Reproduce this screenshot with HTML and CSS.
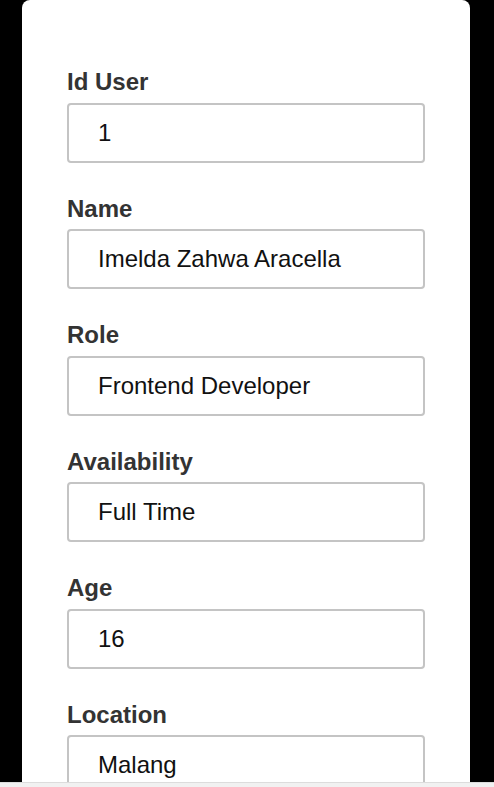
FILE: index.html
```html
<!DOCTYPE html>
<html lang="en">
<head>
  <meta charset="UTF-8">
  <title>User Detail</title>
  <link rel="stylesheet" href="styles.css">
</head>
<body>

  <div class="card">
    <div class="field">
      <label for="idUser">Id User</label>
      <input id="idUser" type="text" value="1" readonly>
    </div>
    <div class="field">
      <label for="name">Name</label>
      <input id="name" type="text" value="Imelda Zahwa Aracella" readonly>
    </div>
    <div class="field">
      <label for="role">Role</label>
      <input id="role" type="text" value="Frontend Developer" readonly>
    </div>
    <div class="field">
      <label for="availability">Availability</label>
      <input id="availability" type="text" value="Full Time" readonly>
    </div>
    <div class="field">
      <label for="age">Age</label>
      <input id="age" type="text" value="16" readonly>
    </div>
    <div class="field">
      <label for="location">Location</label>
      <input id="location" type="text" value="Malang" readonly>
    </div>
  </div>

  <div class="scroll-strip"></div>

</body>
</html>
```

FILE: styles.css
```css
body {
  margin: 0;
  background: #000;
  font-family: 'Liberation Sans', Arial, sans-serif;
  height: 787px;
  overflow: hidden;
}

.card {
  background: #fff;
  width: 448px;
  margin: 0 auto;
  padding: 68px 45px 0;
  box-sizing: border-box;
  border-radius: 8px 8px 0 0;
  min-height: 800px;
  position: relative;
  left: -1px;
}

.field {
  margin-bottom: 32px;
}

.field label {
  display: block;
  font-size: 24px;
  line-height: 28px;
  font-weight: bold;
  color: #333;
  margin-bottom: 6.5px;
}

.field input {
  display: block;
  width: 100%;
  height: 60px;
  box-sizing: border-box;
  border: 2px solid #c4c4c4;
  border-radius: 4px;
  padding: 0 29px;
  font-family: inherit;
  font-size: 24px;
  color: #111;
  background: #fff;
  outline: none;
}

.scroll-strip {
  position: fixed;
  left: 0;
  right: 0;
  bottom: 0;
  height: 4px;
  background: #f1f1f1;
  border-top: 1px solid #dcdcdc;
}
```
